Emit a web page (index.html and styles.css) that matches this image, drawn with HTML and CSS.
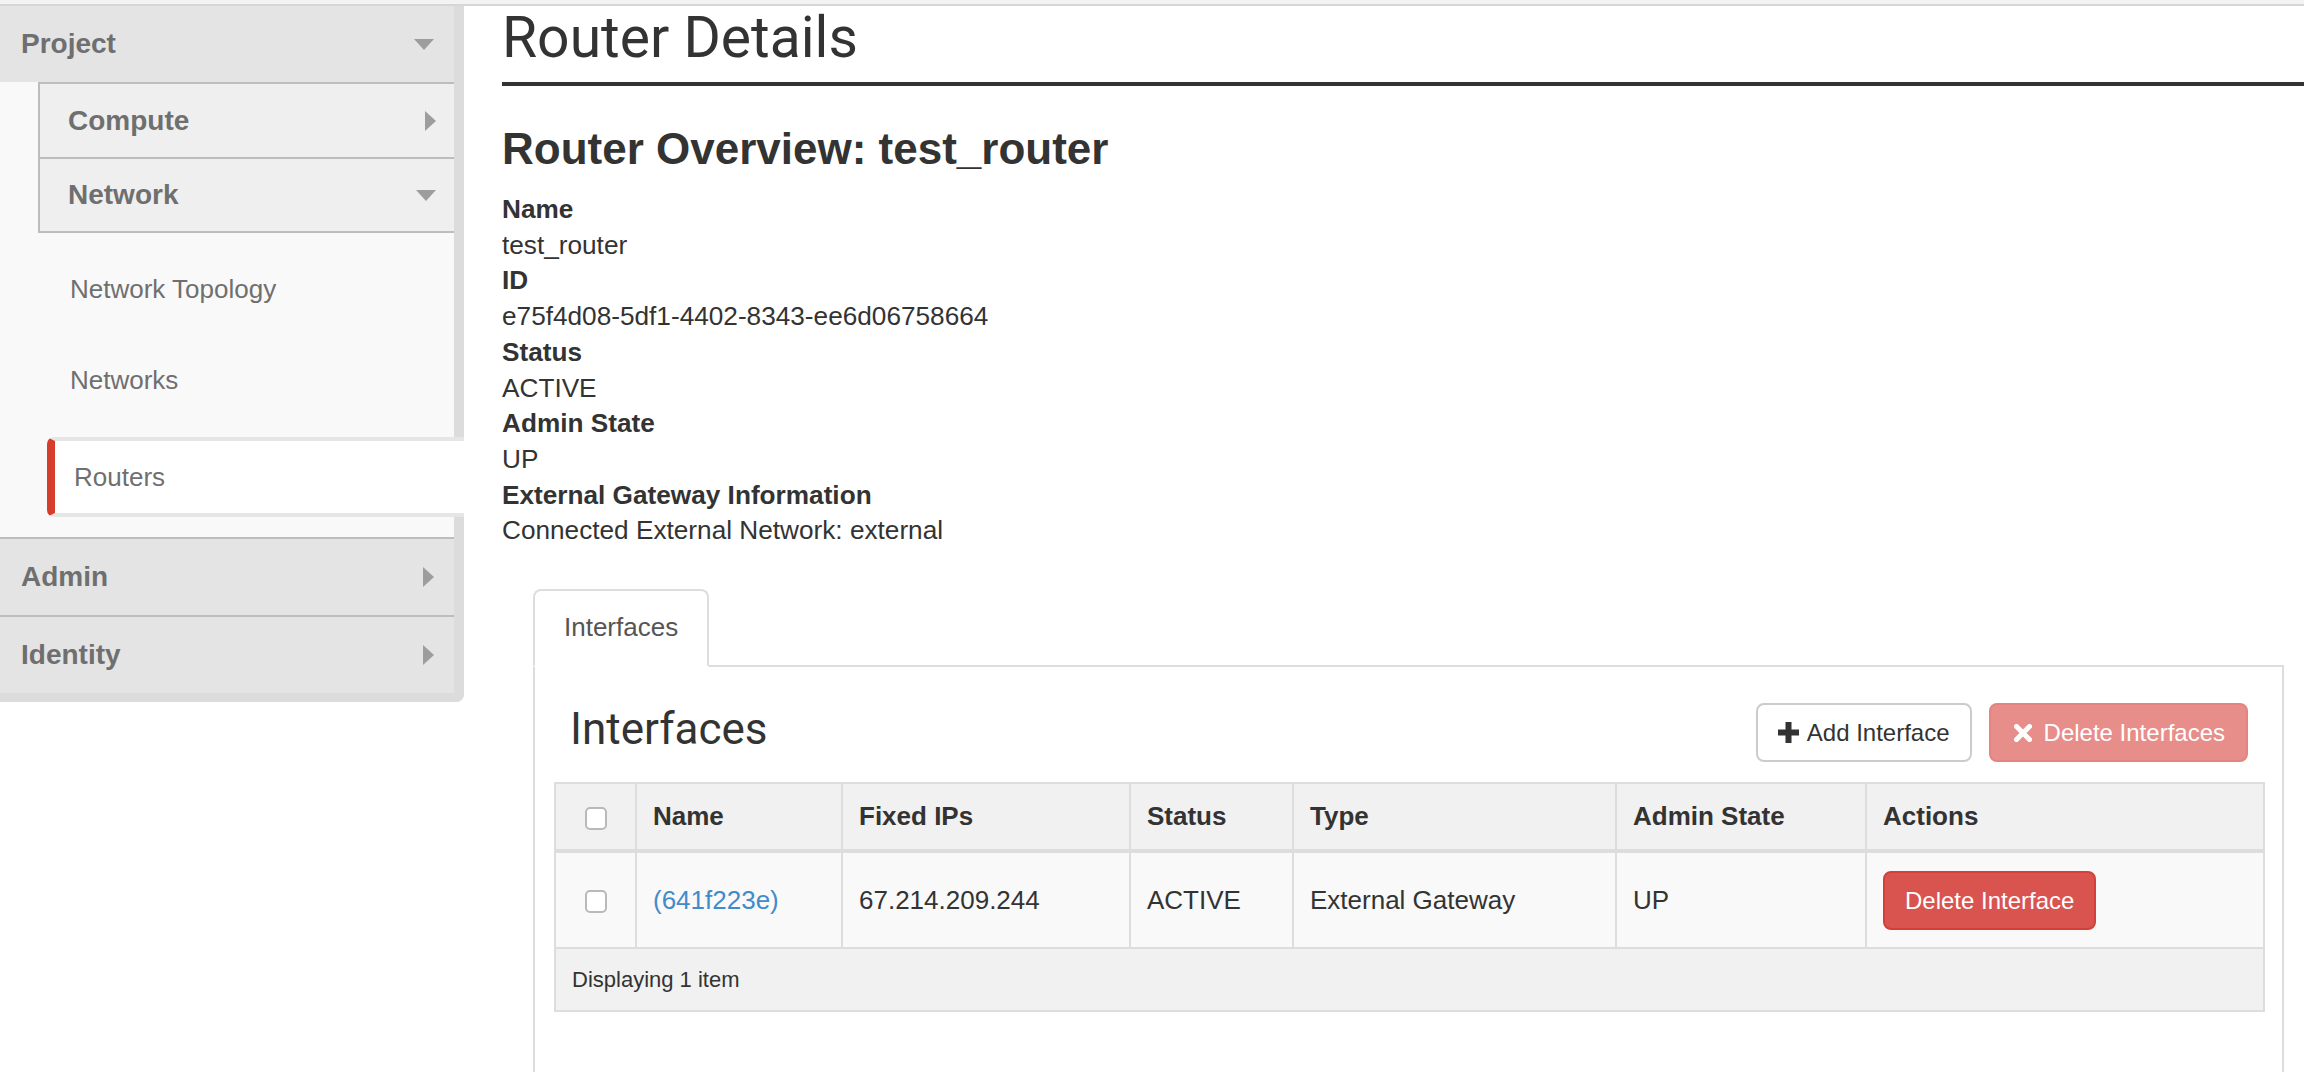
FILE: index.html
```html
<!DOCTYPE html>
<html lang="en">
<head>
<meta charset="utf-8">
<title>Router Details</title>
<link rel="stylesheet" href="styles.css">
</head>
<body>
<div class="topbar"></div>
<div class="layout">
  <nav class="sidebar">
    <div class="panel-head"><span>Project</span><i class="caret-down"></i></div>
    <div class="subgroup">
      <div class="sub-head"><span>Compute</span><i class="caret-right"></i></div>
      <div class="sub-head"><span>Network</span><i class="caret-down"></i></div>
    </div>
    <ul class="nav-items">
      <li>Network Topology</li>
      <li>Networks</li>
      <li class="active">Routers</li>
    </ul>
    <div class="panel-head bordered"><span>Admin</span><i class="caret-right"></i></div>
    <div class="panel-head bordered"><span>Identity</span><i class="caret-right"></i></div>
  </nav>

  <main class="content">
    <h1 class="page-title">Router Details</h1>
    <h2 class="overview-title">Router Overview: test_router</h2>
    <dl class="details">
      <dt>Name</dt>
      <dd>test_router</dd>
      <dt>ID</dt>
      <dd>e75f4d08-5df1-4402-8343-ee6d06758664</dd>
      <dt>Status</dt>
      <dd>ACTIVE</dd>
      <dt>Admin State</dt>
      <dd>UP</dd>
      <dt>External Gateway Information</dt>
      <dd>Connected External Network: external</dd>
    </dl>

    <section class="tabs">
      <ul class="tab-list">
        <li class="tab active">Interfaces</li>
      </ul>
      <div class="tab-panel">
        <div class="table-header">
          <h3 class="table-title">Interfaces</h3>
          <div class="table-actions">
            <button class="btn btn-default">
              <svg class="icon" width="21" height="21" viewBox="0 0 21 21"><path d="M7.5 0h6v7.5H21v6h-7.5V21h-6v-7.5H0v-6h7.5z" fill="#333"/></svg>
              <span>Add Interface</span>
            </button>
            <button class="btn btn-danger disabled">
              <svg class="icon" width="18" height="18" viewBox="0 0 18 18"><path d="M2.5 2.5L15.5 15.5M15.5 2.5L2.5 15.5" stroke="#fff" stroke-width="5" stroke-linecap="square"/></svg>
              <span>Delete Interfaces</span>
            </button>
          </div>
        </div>
        <table class="data-table">
          <thead>
            <tr>
              <th class="col-check"><input type="checkbox" class="check"></th>
              <th class="col-name">Name</th>
              <th class="col-ips">Fixed IPs</th>
              <th class="col-status">Status</th>
              <th class="col-type">Type</th>
              <th class="col-admin">Admin State</th>
              <th class="col-actions">Actions</th>
            </tr>
          </thead>
          <tbody>
            <tr>
              <td class="col-check"><input type="checkbox" class="check"></td>
              <td><a class="link" href="#">(641f223e)</a></td>
              <td>67.214.209.244</td>
              <td>ACTIVE</td>
              <td>External Gateway</td>
              <td>UP</td>
              <td><button class="btn btn-danger row-btn">Delete Interface</button></td>
            </tr>
          </tbody>
          <tfoot>
            <tr>
              <td colspan="7">Displaying 1 item</td>
            </tr>
          </tfoot>
        </table>
      </div>
    </section>
  </main>
</div>
</body>
</html>
```

FILE: styles.css
```css
* { box-sizing: border-box; }

html, body {
  margin: 0;
  padding: 0;
  background: #fff;
  overflow: hidden;
}

body {
  font-family: "Liberation Sans", Arial, Helvetica, sans-serif;
  color: #333;
  font-size: 26px;
}

.topbar {
  height: 6px;
  background: #f3f3f3;
  border-bottom: 2px solid #d6d6d6;
}

.layout {
  display: flex;
  align-items: flex-start;
}

/* Sidebar */
.sidebar {
  width: 464px;
  flex: none;
  background: #f9f9f9;
  border-right: 10px solid #dcdcdc;
  border-bottom: 9px solid #dcdcdc;
  border-bottom-right-radius: 8px;
  color: #6f6f6f;
}

.panel-head {
  height: 76px;
  display: flex;
  align-items: center;
  justify-content: space-between;
  padding: 0 20px 0 21px;
  background: #e4e4e4;
  font-size: 28px;
  font-weight: bold;
}

.panel-head.bordered {
  height: 78px;
  border-top: 2px solid #bdbdbd;
}

.subgroup {
  margin-left: 38px;
  border-left: 2px solid #bdbdbd;
  border-bottom: 2px solid #bdbdbd;
  background: #efefef;
}

.sub-head {
  height: 75px;
  display: flex;
  align-items: center;
  justify-content: space-between;
  padding: 0 18px 0 28px;
  border-top: 2px solid #bdbdbd;
  font-size: 28px;
  font-weight: bold;
}

.sub-head + .sub-head { height: 74px; }

.caret-down {
  width: 0;
  height: 0;
  border-left: 10px solid transparent;
  border-right: 10px solid transparent;
  border-top: 11px solid #9d9d9d;
}

.caret-right {
  width: 0;
  height: 0;
  border-top: 10px solid transparent;
  border-bottom: 10px solid transparent;
  border-left: 11px solid #9d9d9d;
}

.nav-items {
  list-style: none;
  margin: 0;
  padding: 16px 0 20px 0;
  display: flex;
  flex-direction: column;
  gap: 11px;
}

.nav-items li {
  height: 80px;
  display: flex;
  align-items: center;
  padding-left: 70px;
  font-size: 26px;
}

.nav-items li.active {
  margin-top: 6px;
  margin-left: 47px;
  margin-right: -10px;
  padding-left: 19px;
  background: #fff;
  border-left: 8px solid #d63d2b;
  border-top: 4px solid #e6e6e6;
  border-bottom: 4px solid #e6e6e6;
  border-radius: 7px 0 0 7px;
  position: relative;
  z-index: 1;
}

/* Main */
.content {
  flex: 1;
  min-width: 0;
  padding-left: 38px;
}

.page-title {
  margin: 0;
  font-family: Roboto, "Liberation Sans", sans-serif;
  font-weight: 400;
  font-size: 57px;
  line-height: 64px;
  padding-bottom: 12px;
  border-bottom: 4px solid #333;
  color: #333;
}

.overview-title {
  margin: 37px 0 0 0;
  font-family: "Liberation Sans", Arial, sans-serif;
  font-weight: bold;
  font-size: 44px;
  line-height: 52px;
  color: #333;
}

.details {
  margin: 17px 0 0 0;
  line-height: 35.7px;
  font-size: 26.2px;
}

.details dt { font-weight: bold; }
.details dd { margin: 0; }

/* Tabs */
.tabs {
  margin: 40px 20px 0 31px;
}

.tab-list {
  list-style: none;
  margin: 0;
  padding: 0;
  display: flex;
}

.tab {
  height: 78px;
  padding: 0 29px;
  line-height: 72px;
  border: 2px solid #ddd;
  border-bottom: 2px solid #fff;
  border-radius: 8px 8px 0 0;
  background: #fff;
  margin-bottom: -2px;
  position: relative;
  z-index: 1;
  font-size: 26px;
  color: #555;
}

.tab-panel {
  border: 2px solid #ddd;
  border-bottom: 0;
  padding: 36px 17px 120px 19px;
}

.table-header {
  display: flex;
  justify-content: space-between;
  align-items: flex-start;
  padding-right: 17px;
  margin-bottom: 20px;
}

.table-title {
  margin: 0;
  padding-left: 16px;
  font-family: Roboto, "Liberation Sans", sans-serif;
  font-weight: 400;
  font-size: 44px;
  line-height: 52px;
  color: #333;
}

.table-actions {
  display: flex;
  gap: 17px;
}

.btn {
  font-family: "Liberation Sans", Arial, sans-serif;
  font-size: 24px;
  line-height: 35px;
  padding: 10px 20px;
  border: 2px solid #ccc;
  border-radius: 8px;
  background: #fff;
  color: #333;
  display: inline-flex;
  align-items: center;
  gap: 8px;
  cursor: pointer;
}

.btn .icon { flex: none; }

.btn-danger {
  background: #d9534f;
  border-color: #d43f3a;
  color: #fff;
}

.btn-danger.disabled {
  background: #e78e8b;
  border-color: #e4837f;
  padding-left: 23px;
  padding-right: 21px;
  gap: 12px;
}

.row-btn {
  display: flex;
  width: fit-content;
  padding: 10px 20px;
}

/* Table */
.data-table {
  width: 100%;
  table-layout: fixed;
  border-collapse: separate;
  border-spacing: 0;
  border-top: 2px solid #ddd;
  border-left: 2px solid #ddd;
}

.data-table th,
.data-table td {
  text-align: left;
  vertical-align: middle;
  border-right: 2px solid #ddd;
}

.data-table th {
  background: #f1f1f1;
  font-weight: bold;
  font-size: 26px;
  line-height: 37px;
  padding: 14px 16px;
  border-bottom: 4px solid #ddd;
}

.data-table tbody td {
  background: #f9f9f9;
  font-size: 26px;
  line-height: 37px;
  padding: 18px 16px 17px 16px;
  border-bottom: 2px solid #ddd;
}

.data-table tfoot td {
  background: #f1f1f1;
  font-size: 22px;
  line-height: 31px;
  padding: 15px 16px;
  border-bottom: 2px solid #ddd;
}

.data-table .col-check { width: 81px; text-align: center; padding: 0; }
.col-name { width: 206px; }
.col-ips { width: 288px; }
.col-status { width: 163px; }
.col-type { width: 323px; }
.col-admin { width: 250px; }

.check {
  -webkit-appearance: none;
  appearance: none;
  width: 22px;
  height: 23px;
  margin: 0;
  border: 2px solid #b9b9b9;
  border-radius: 5px;
  background: #fff;
  vertical-align: middle;
  display: inline-block;
}

.link {
  color: #428bca;
  text-decoration: none;
}
```
